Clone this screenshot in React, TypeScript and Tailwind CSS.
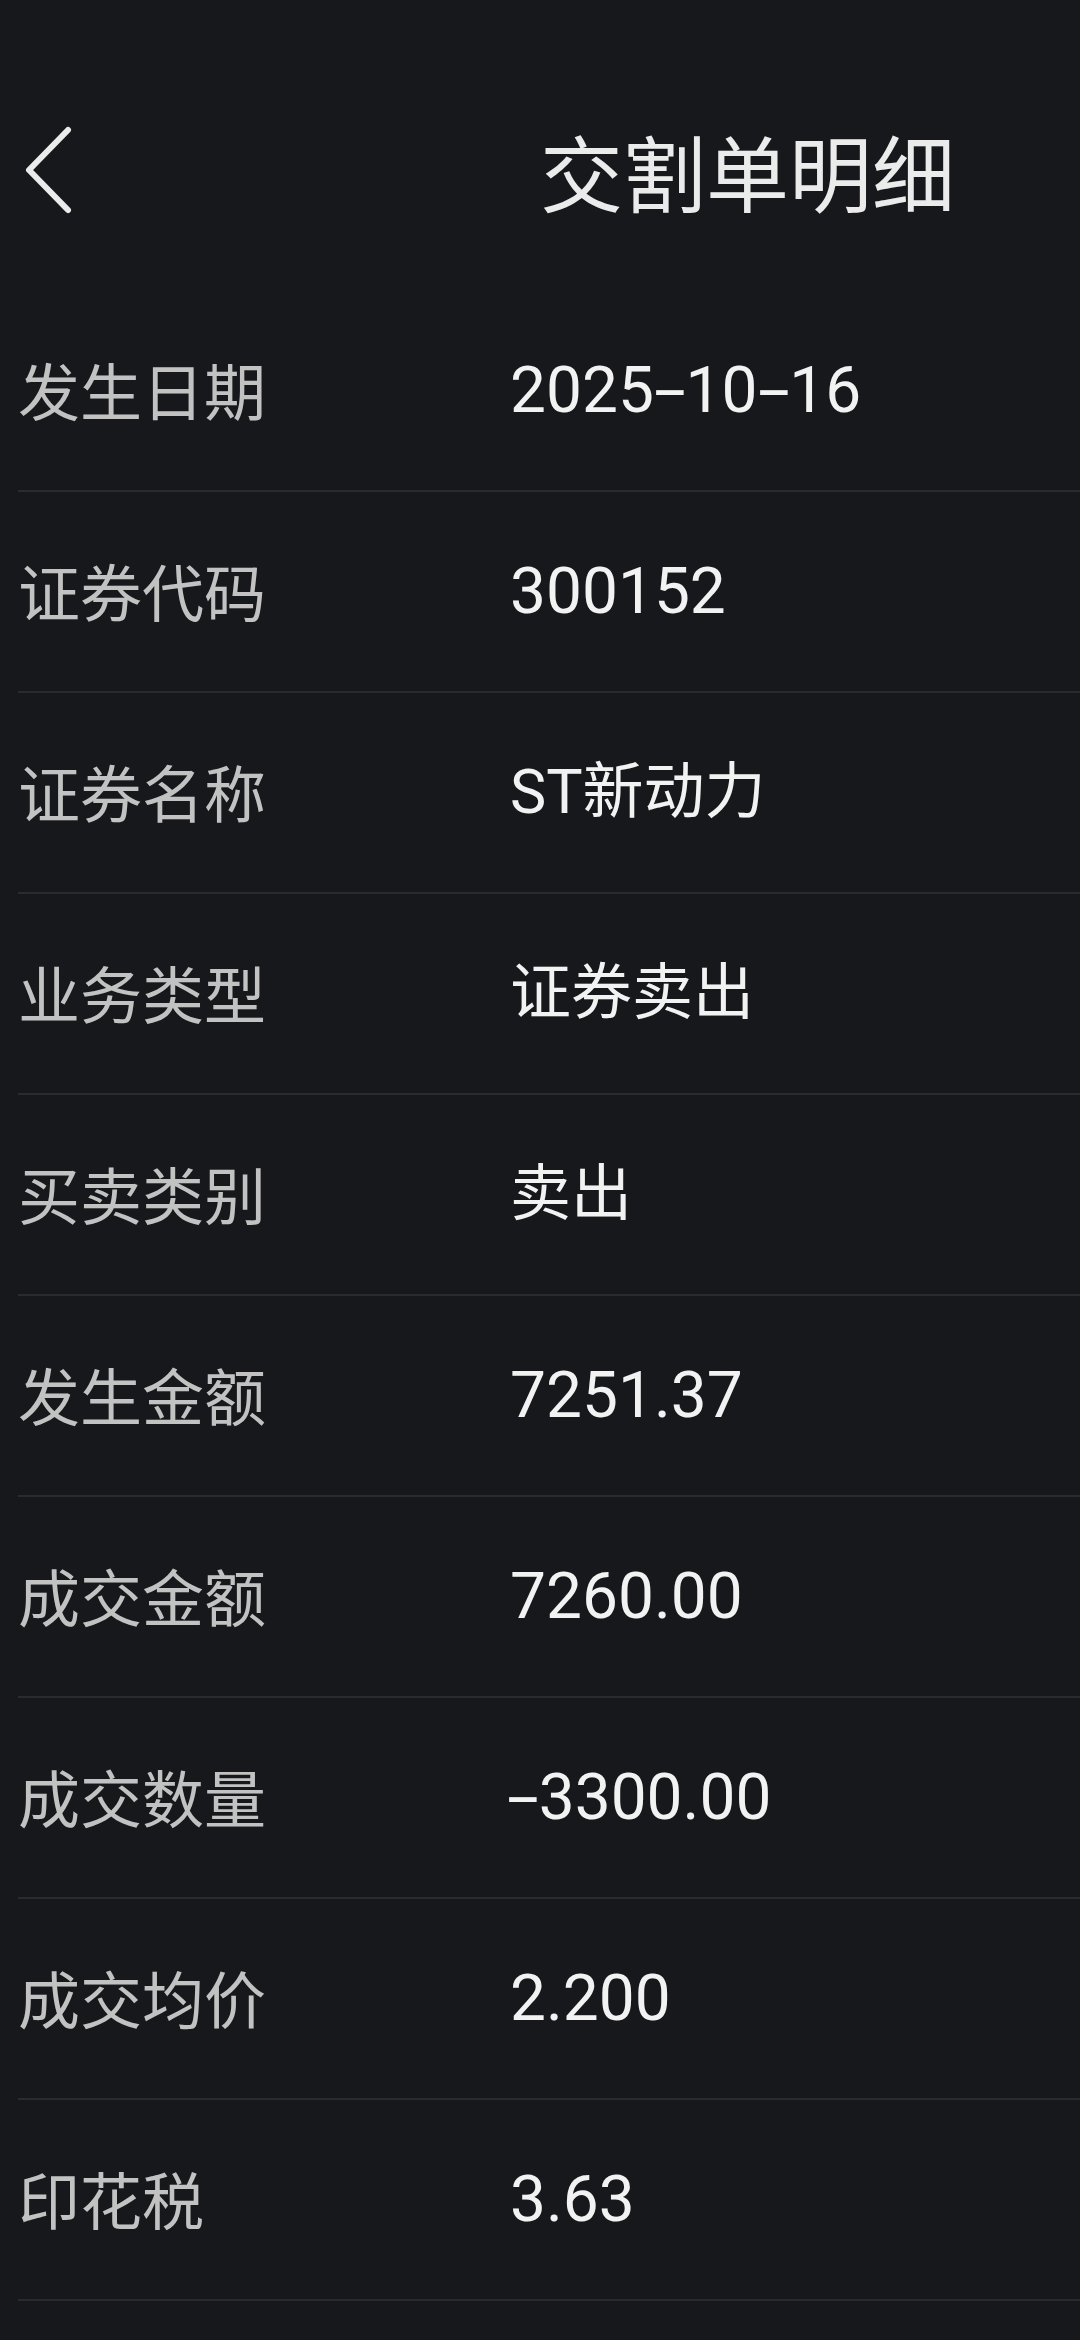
import React from "react";

const rows: [string, string][] = [
  ["发生日期", "2025-10-16"],
  ["证券代码", "300152"],
  ["证券名称", "ST新动力"],
  ["业务类型", "证券卖出"],
  ["买卖类别", "卖出"],
  ["发生金额", "7251.37"],
  ["成交金额", "7260.00"],
  ["成交数量", "-3300.00"],
  ["成交均价", "2.200"],
  ["印花税", "3.63"],
];

const cjk = { fontFamily: '"Noto Sans CJK SC", "Noto Sans", sans-serif' };
const val = { fontFamily: 'Roboto, "Noto Sans CJK SC", sans-serif' };

function Value({ text }: { text: string }) {
  const parts = text.split("-");
  const out: React.ReactNode[] = [];
  parts.forEach((p, i) => {
    if (i > 0) {
      const leading = i === 1 && parts[0] === "";
      out.push(
        <span
          key={"h" + i}
          className={
            leading
              ? "inline-block -ml-[3px] mr-[14px] scale-x-[1.8] origin-left"
              : "inline-block mx-[7px] scale-x-[1.8] origin-center"
          }
        >
          -
        </span>
      );
    }
    if (p) out.push(<span key={"p" + i}>{p}</span>);
  });
  return <>{out}</>;
}

export default function App() {
  return (
    <div className="w-[1080px] h-[2340px] bg-[#17181b] overflow-hidden">
      <div className="h-[291px] pt-[120px]">
        <div className="h-[100px] flex items-center">
          <div className="pl-[22px] w-[100px] flex items-center">
            <svg width="52" height="90" viewBox="0 0 52 90" fill="none">
              <path d="M46 5 L7 45 L46 85" stroke="#ebebeb" strokeWidth="6" strokeLinecap="round" strokeLinejoin="round" />
            </svg>
          </div>
          <div className="ml-[440px] text-[83px] leading-none text-[#ebebeb]" style={cjk}>
            交割单明细
          </div>
        </div>
      </div>
      <div className="ml-[18px]">
        {rows.map(([k, v]) => {
          const hasCjk = /[\u4e00-\u9fff]/.test(v);
          return (
            <div key={k} className="h-[201px] border-b-2 border-[#2a2b2e] flex items-center">
              <div className="w-[492px] text-[62px] leading-none text-[#c2c2c2] -mt-[3px]" style={cjk}>
                {k}
              </div>
              <div
                className={hasCjk ? "text-[61px] leading-none text-[#f2f2f2]" : "text-[64px] leading-none text-[#f2f2f2]"}
                style={val}
              >
                <Value text={v} />
              </div>
            </div>
          );
        })}
      </div>
    </div>
  );
}
